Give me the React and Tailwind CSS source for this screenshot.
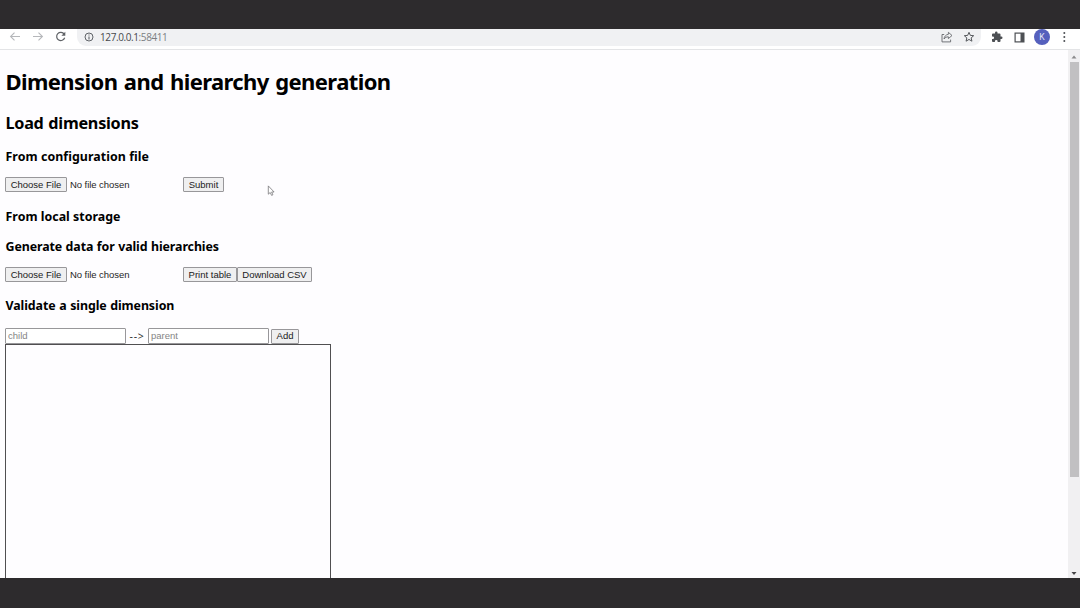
import React from "react";

function Toolbar() {
  return (
    <div className="flex h-[21px] shrink-0 items-start overflow-hidden border-b border-[#e3e4e6] bg-white text-[#5f6368]">
      <div className="flex h-4 w-[77px] shrink-0 items-center gap-[11px] pl-[9px]">
        <svg width="12" height="12" viewBox="0 0 12 12" fill="none" stroke="#b5b7ba" strokeWidth="1.1">
          <path d="M11 5.500H1.800M5.500 1.600 1.600 5.500 5.500 9.400" />
        </svg>
        <svg width="12" height="12" viewBox="0 0 12 12" fill="none" stroke="#b5b7ba" strokeWidth="1.1">
          <path d="M1 5.500h9.200M6.500 1.600 10.400 5.500 6.500 9.400" />
        </svg>
        <svg width="12" height="12" viewBox="0 0 12 12" fill="none" stroke="#5f6266" strokeWidth="1.2">
          <path d="M9.200 3.200A4.100 4.100 0 1 0 9.700 6.700" />
          <path d="M10.300.8v3.900H6.400z" fill="#5f6266" stroke="none" />
        </svg>
      </div>
      <div className="flex h-[17px] w-[904px] shrink-0 items-center rounded-b-[9px] bg-[#f0f1f3] pb-px pl-[7px] pr-[6px]">
        <svg width="10" height="10" viewBox="0 0 10 10" fill="none" stroke="#5f6368" strokeWidth="1">
          <circle cx="5" cy="5" r="4" />
          <path d="M5 4.400v3M5 2.400v1.100" strokeWidth="1.1" />
        </svg>
        <span className="ml-[6px] text-[10px] leading-4 tracking-[-0.400px] text-[#45484c] [font-family:'Open_Sans','Noto_Sans',sans-serif]">
          127.0.0.1<span className="text-[#7b7e82]">:58411</span>
        </span>
        <svg className="ml-auto" width="12" height="12" viewBox="0 0 12 12" fill="none" stroke="#65686c" strokeWidth="0.9" strokeLinejoin="round">
          <path d="M3.200 3.500H1v7.400h8.600V8.600" />
          <path d="M7.400 1.300 11 4.500 7.400 7.600V5.800C5.400 5.800 4.200 6.500 3 8c.3-2.500 1.800-4.300 4.400-4.700z" />
        </svg>
        <svg className="ml-[10px]" width="12" height="12" viewBox="0 0 12 12" fill="none" stroke="#55585c" strokeWidth="1">
          <path d="m6 1.300 1.350 3.100 3.350.3-2.550 2.200.8 3.300L6 8.450 3.050 10.200l.8-3.300L1.300 4.700l3.350-.3z" />
        </svg>
      </div>
      <div className="flex h-4 items-center">
        <svg className="ml-[10px]" width="12" height="12" viewBox="0 0 24 24" fill="#4d5054">
          <path d="M20.500 11H19V7a2 2 0 0 0-2-2h-4V3.500a2.500 2.500 0 0 0-5 0V5H4a2 2 0 0 0-2 2v3.800h1.500a2.700 2.700 0 0 1 0 5.400H2V20a2 2 0 0 0 2 2h3.800v-1.500a2.700 2.700 0 0 1 5.400 0V22H17a2 2 0 0 0 2-2v-4h1.500a2.500 2.500 0 0 0 0-5z" />
        </svg>
        <svg className="ml-[11px]" width="11" height="11" viewBox="0 0 11 11">
          <rect x="1.100" y="1.100" width="8.800" height="8.800" fill="none" stroke="#4d5054" strokeWidth="1.200" />
          <path d="M6.500 1h3.500v9H6.500z" fill="#4d5054" />
        </svg>
        <div className="ml-[9px] flex size-4 items-center justify-center rounded-full bg-[#5560bd] pt-px text-[8.500px] leading-none text-[#e4e5f5] [font-family:Roboto,sans-serif]">K</div>
        <svg className="ml-[12px]" width="4" height="12" viewBox="0 0 4 12" fill="#4d5054">
          <circle cx="2.300" cy="2" r="1" />
          <circle cx="2.300" cy="6" r="1" />
          <circle cx="2.300" cy="10" r="1" />
        </svg>
      </div>
    </div>
  );
}

function Button({ className, children }) {
  return (
    <button type="button" className={`flex h-[15px] shrink-0 items-center justify-center whitespace-nowrap rounded-[1px] border border-[#98979a] bg-[#efeff0] text-[9.500px] leading-none text-[#202020] ${className}`}>
      {children}
    </button>
  );
}

function FilePicker() {
  return (
    <div className="flex w-[177px] shrink-0 items-center">
      <Button className="w-[62px]">Choose File</Button>
      <span className="ml-[3px] whitespace-nowrap text-[9.500px] leading-[15px] tracking-[-0.060px] text-[#252525]">No file chosen</span>
    </div>
  );
}

function Heading({ className, children }) {
  return (
    <h3 className={`h-[18px] whitespace-nowrap pl-[0.500px] text-[12.400px] font-bold leading-[19px] text-black [font-family:'Noto_Sans',sans-serif] ${className}`}>
      {children}
    </h3>
  );
}

function Scrollbar() {
  return (
    <div className="flex w-3 shrink-0 flex-col items-center bg-[#f1f0f2]">
      <svg className="mt-1 shrink-0" width="6" height="5" viewBox="0 0 6 5"><path d="M0.500 4.500 3 1.500l2.500 3z" fill="#8b8a8c" /></svg>
      <div className="mt-[3px] h-[415px] w-[9px] shrink-0 bg-[#c1c0c2]" />
      <svg className="mb-[2px] mt-auto shrink-0" width="6" height="5" viewBox="0 0 6 5"><path d="M0.500 1 3 4l2.500-3z" fill="#454446" /></svg>
    </div>
  );
}

export default function App() {
  return (
    <div className="relative flex h-[608px] w-[1080px] flex-col overflow-hidden bg-[#2d2b2d] [font-family:'Liberation_Sans',Arial,sans-serif]">
      <div className="h-[29px] shrink-0" />
      <Toolbar />
      <div className="flex h-[528px] shrink-0 overflow-hidden bg-[#fefdff]">
        <main className="flex flex-1 flex-col pl-[5px] [&>*]:shrink-0">
          <h1 className="mt-[16px] h-8 whitespace-nowrap pl-[0.500px] text-[22px] font-bold leading-[30px] tracking-[-0.600px] [word-spacing:1.400px] text-black [font-family:'Noto_Sans',sans-serif]">Dimension and hierarchy generation</h1>
          <h2 className="mt-[12px] h-6 whitespace-nowrap pl-[0.500px] text-[16.200px] font-bold leading-[26px] tracking-[-0.250px] [word-spacing:0.800px] text-black [font-family:'Noto_Sans',sans-serif]">Load dimensions</h2>
          <Heading className="mt-[13px] tracking-[0.060px]">From configuration file</Heading>
          <div className="mt-[12px] flex h-[15px]">
            <FilePicker />
            <Button className="ml-px w-[41px]">Submit</Button>
          </div>
          <Heading className="mt-[15px] tracking-[0.020px]">From local storage</Heading>
          <Heading className="mt-[12px] tracking-[-0.090px] [word-spacing:0.400px]">Generate data for valid hierarchies</Heading>
          <div className="mt-[12px] flex h-[15px]">
            <FilePicker />
            <Button className="ml-px w-[54px]">Print table</Button>
            <Button className="w-[75px]">Download CSV</Button>
          </div>
          <Heading className="mt-[14px] tracking-[-0.080px] [word-spacing:0.500px]">Validate a single dimension</Heading>
          <div className="mt-[14px] flex h-4 items-center">
            <input placeholder="child" className="h-4 w-[121px] rounded-[1px] border border-[#98979a] bg-white px-[2px] pb-[2px] text-[9.500px] text-[#202020] placeholder:text-[#858585]" />
            <span className="w-[22px] text-center text-[10.500px] leading-4 tracking-[0.700px] text-[#303030] [font-family:'Noto_Sans',sans-serif]">--&gt;</span>
            <input placeholder="parent" className="h-4 w-[121px] rounded-[1px] border border-[#98979a] bg-white px-[2px] pb-[2px] text-[9.500px] text-[#202020] placeholder:text-[#858585]" />
            <Button className="ml-[2px] w-[28px]">Add</Button>
          </div>
          <div className="h-[300px] w-[326px] border border-[#504f51]" />
        </main>
        <Scrollbar />
      </div>
      <svg className="absolute left-[267px] top-[185px]" width="8" height="12" viewBox="0 0 8 12">
        <path d="M1.300.9v8.300l1.900-1.700 1.400 2.900 1.300-.6-1.300-2.800h2.500z" fill="#fff" stroke="#77767a" strokeWidth=".8" />
      </svg>
    </div>
  );
}
